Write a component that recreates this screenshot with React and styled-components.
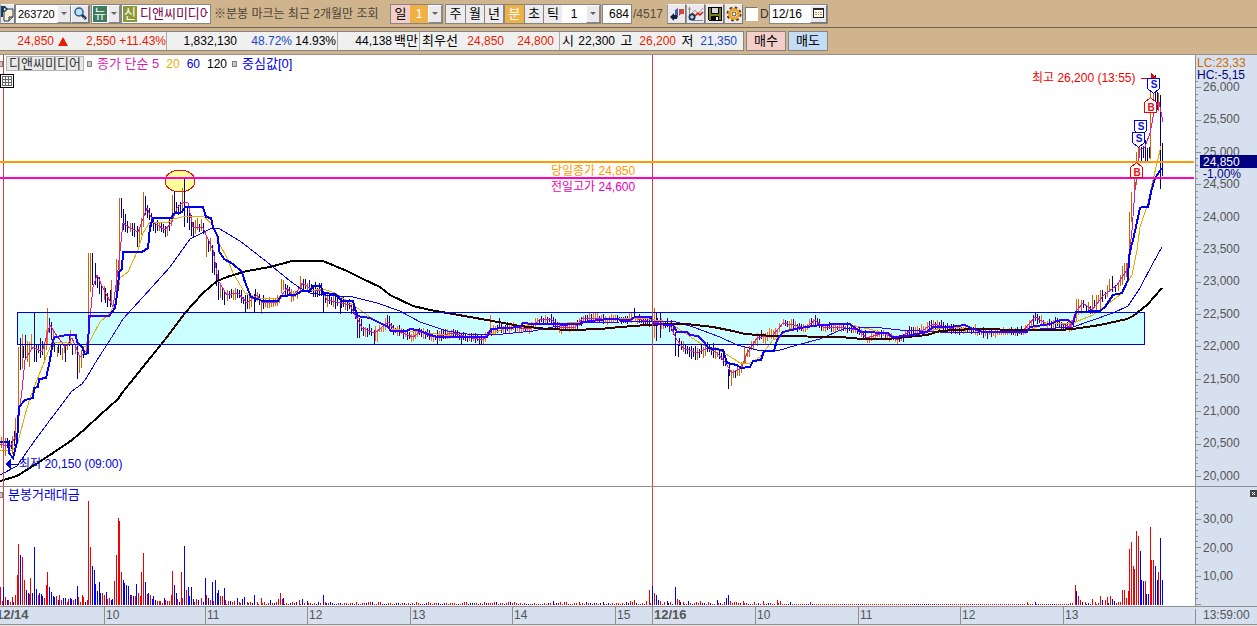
import React, { useState } from 'react'
import styled, { createGlobalStyle } from 'styled-components'

const GlobalStyle = createGlobalStyle`
    * { box-sizing: border-box; }
    body { margin: 0; background: #d0b48e; }
    button, input, select { font: inherit; color: inherit; margin: 0; }
`

const FONT = '"Liberation Sans", "Noto Sans CJK KR", sans-serif'

const Page = styled.div`
    display: flex;
    flex-direction: column;
    height: 100vh;
    min-height: 480px;
    overflow: hidden;
    font-family: ${FONT};
    font-size: 12px;
    line-height: 16px;
    color: #000;
`

/* ---------- top bars ---------- */

const Toolbar = styled.header`
    display: flex;
    align-items: center;
    flex: none;
    height: 28px;
    border-bottom: 1px solid #6e6355;
    white-space: nowrap;
`
const Group = styled.div`
    display: flex;
    flex: none;
    width: ${p => p.$w}px;
    height: 20px;
    margin-right: ${p => p.$gap || 0}px;
    border: 1px solid #858585;
    background: #fff;
    overflow: hidden;
`
const Field = styled.input`
    flex: 1;
    min-width: 0;
    width: 0;
    padding: 0 2px;
    border: 0;
    outline: 0;
    background: transparent;
    text-align: ${p => p.$align || 'left'};
    color: ${p => p.$color || '#000'};
    font-size: ${p => p.$size || 12}px;
`
const Picker = styled.select`
    flex: 1;
    min-width: 0;
    padding: 0;
    border: 0;
    outline: 0;
    appearance: none;
    border-radius: 0;
    text-align: center;
    text-align-last: center;
    background: ${p => p.$bg || '#fff'};
    color: ${p => p.$color || '#000'};
`
const SmallButton = styled.button`
    display: flex;
    flex: none;
    align-items: center;
    justify-content: center;
    width: ${p => p.$w || 19}px;
    height: 18px;
    padding: 0;
    border: 1px solid;
    border-color: #fff #777 #777 #fff;
    background: #ebe9eb;
`
const ToolButton = styled(SmallButton)`
    height: 20px;
    border-color: #f4f4f4 #777 #777 #999;
`
const Arrow = styled.span`
    display: flex;
    flex: none;
    align-items: center;
    justify-content: center;
    width: ${p => p.$w || 14}px;
    border: 1px solid;
    border-color: #fff #888 #888 #fff;
    background: #ebe9eb;

    &::after {
        content: '';
        border: 3px solid transparent;
        border-top-color: #666;
        border-bottom: 0;
    }
`
const Badge = styled.span`
    flex: none;
    width: 14px;
    margin: 1px;
    background: ${p => p.$bg};
    color: #fff;
    font-size: 13px;
    text-align: center;
`
const Notice = styled.span`
    flex: none;
    width: 178px;
    padding-left: 2px;
    color: #4c4437;
`
const Period = styled.button`
    flex: none;
    width: 19px;
    padding: 0;
    border: 0;
    border-left: ${p => (p.$first ? 0 : 1)}px solid #858585;
    background: ${p => p.$bg || '#ececec'};
    color: ${p => p.$color || '#000'};
    font-size: 13px;
    line-height: 17px;
`
const Total = styled.span`
    flex: none;
    width: 34px;
    color: #554a3c;
`
const DayCheck = styled.label`
    display: flex;
    flex: none;
    align-items: center;
    width: 26px;
    padding-left: 2px;
    gap: 2px;
    color: #333;

    input {
        appearance: none;
        width: 13px;
        height: 14px;
        border: 1px solid;
        border-color: #777 #fff #fff #777;
        background: #fff;
    }
`

const QuoteBar = styled.section`
    display: flex;
    align-items: center;
    flex: none;
    height: 27px;
    border-bottom: 1px solid #989086;
    white-space: nowrap;
`
const Quote = styled.div`
    display: flex;
    flex: none;
    height: 20px;
    margin-right: 2px;
    border: 1px solid #858585;
    border-left: 0;
    background: #f0f0f0;
`
const Cell = styled.div`
    display: flex;
    align-items: center;
    width: ${p => p.$w}px;
    border-right: ${p => (p.$last ? 0 : 1)}px solid #aaa;
`
const Num = styled.span`
    width: ${p => p.$w}px;
    text-align: right;
    color: ${p => p.$color || '#000'};
`
const Tag = styled.span`
    width: ${p => p.$w}px;
    padding-left: 2px;
    font-size: 13px;
`
const Triangle = styled.i`
    margin-left: 4px;
    border: 5px solid transparent;
    border-top: 0;
    border-bottom: 9px solid #e81c00;
`
const OrderButton = styled.button`
    width: 40px;
    height: 20px;
    margin-right: 2px;
    padding: 0;
    border: 1px solid #858585;
    background: ${p => p.$bg};
    font-size: 13px;
`

/* ---------- chart ---------- */

const ChartGrid = styled.main`
    display: grid;
    flex: 1;
    min-height: 0;
    grid-template-columns: minmax(0, 1fr) 62px;
    grid-template-rows: minmax(0, 432fr) minmax(0, 119fr) 19px;
    background: #fff;
`
const Pane = styled.div`
    position: relative;
    min-width: 0;
    min-height: 0;
    overflow: hidden;
    border-bottom: ${p => (p.$line ? 1 : 0)}px solid #8f8f8f;

    svg { display: block; width: 100%; height: 100%; }
`
const Scale = styled(Pane)`
    border-left: 1px solid #8f8f8f;
    background: #d6e0ef;
`
const TimePane = styled(Pane)`
    border-top: 1px solid #8f8f8f;
    border-bottom: 1px solid #8f8f8f;
    background: #d6e0ef;
`
const Legend = styled.div`
    position: absolute;
    top: 1px;
    left: 0;
    display: flex;
    align-items: center;
    gap: 3px;
    font-size: 13px;
    line-height: 14px;
    white-space: nowrap;
`
const Knob = styled.i`
    width: ${p => (p.$half ? 3 : 5)}px;
    height: 6px;
    border: 1px solid #808080;
    border-left-width: ${p => (p.$half ? 0 : 1)}px;
    background: #c8c8c8;
`
const NameButton = styled.button`
    width: 78px;
    height: 15px;
    padding: 0;
    border: 1px solid #b4b4b4;
    background: #e9e9e9;
    line-height: 13px;
    color: #333;
`
const Key = styled.span`
    padding: 0 2px;
    color: ${p => p.$color};
    font-size: ${p => (p.$num ? 12 : 13)}px;
`
const GridButton = styled.button`
    position: absolute;
    top: 19px;
    left: 0;
    width: 14px;
    height: 14px;
    padding: 1px;
    border: 1px solid #000;
    background: #fff;
`
const CloseButton = styled.button`
    position: absolute;
    top: 3px;
    right: 0;
    width: 7px;
    height: 7px;
    padding: 0;
    border: 0;
    background: #444;
`
const StatusStrip = styled.footer`
    flex: none;
    height: 1px;
    background: #e4e4e4;
`

/* x,y pairs of every overlay line */
const ma5 = [0,444,10,447,17,433,22,390,25,360,33,347,42,352,50,325,55,333,65,347,72,338,80,357,87,350,93,287,97,275,103,288,113,307,118,270,123,223,130,228,138,232,147,208,153,222,165,230,172,222,177,208,183,202,188,203,193,227,203,228,213,250,218,280,227,295,238,293,247,303,257,295,263,303,277,302,287,288,293,297,303,283,312,290,322,290,327,300,350,305,362,328,375,333,388,322,395,330,413,337,420,332,433,337,453,333,467,337,483,340,490,330,507,327,530,329,540,319,552,320,560,328,575,327,583,318,597,318,607,320,620,318,633,318,647,321,670,325,677,340,683,348,697,353,707,348,717,353,725,362,732,373,742,367,747,353,757,338,773,335,783,323,793,325,805,328,815,320,823,327,840,327,857,330,867,338,883,333,897,340,910,331,923,330,933,324,953,329,977,330,983,333,1023,331,1035,317,1047,324,1060,323,1070,327,1077,310,1083,303,1092,310,1103,296,1117,285,1127,270,1129,257,1132,230,1135,190,1140,150,1145,147,1150,133,1155,107,1159,102,1163,122]
const ma20 = [0,450,13,450,18,442,25,415,30,398,37,380,45,360,52,342,67,343,82,346,87,347,93,335,100,322,108,315,115,305,120,278,128,272,138,250,143,233,150,222,167,223,173,219,187,216,203,216,213,225,220,245,227,258,233,273,245,293,260,299,278,298,300,292,323,289,335,293,353,305,370,317,390,329,420,332,453,336,487,336,503,329,537,324,567,323,587,322,610,319,640,318,670,322,680,330,703,345,723,352,740,363,750,363,760,357,773,340,790,329,823,325,847,324,873,330,897,337,920,333,947,327,973,329,1027,331,1047,323,1073,323,1093,315,1120,295,1132,275,1137,250,1140,227,1148,203,1153,180,1161,146]
const ma60 = [0,475,17,466,33,443,50,420,72,391,82,384,87,377,97,360,110,340,123,319,143,297,170,267,190,239,194,237,212,228,218,228,240,241,267,262,290,281,300,288,310,293,325,295,353,297,377,303,400,311,420,322,447,331,467,334,493,335,533,331,553,327,583,323,620,322,653,321,673,321,693,327,720,337,737,345,757,350,777,351,797,345,820,339,843,329,873,327,900,330,940,332,980,332,1027,331,1040,329,1073,327,1093,320,1113,313,1128,306,1140,288,1152,265,1162,247]
const ma120 = [0,481,17,476,33,466,53,453,72,440,85,429,100,415,118,399,122,393,147,362,167,337,185,313,203,293,217,281,227,277,247,271,270,267,292,261,323,261,347,271,363,279,380,287,390,295,413,306,430,310,453,314,487,320,520,326,547,329,573,330,600,329,620,327,647,325,667,324,687,324,713,327,733,331,745,334,773,336,840,337,863,339,887,339,907,337,927,335,940,331,973,329,1027,330,1060,330,1073,329,1100,325,1127,319,1133,316,1147,305,1162,288]
const mid = [0,442,8,442,9,453,13,458,17,442,19,407,25,400,33,398,34,388,38,387,39,379,46,378,50,360,53,340,55,337,63,336,65,335,76,335,77,342,82,347,85,354,88,353,89,316,109,316,115,308,118,288,119,272,122,269,123,252,142,252,148,248,150,227,153,218,172,218,173,214,182,212,185,207,203,207,206,217,211,218,213,227,218,237,219,251,224,259,233,264,242,272,245,282,251,297,258,299,262,301,278,301,281,296,295,295,302,291,310,291,313,286,321,286,323,293,335,294,342,301,353,301,357,316,370,318,388,327,391,331,407,331,410,329,417,330,428,334,437,337,487,337,491,329,520,327,523,323,533,324,580,324,583,322,607,319,630,320,635,317,651,317,653,324,673,325,677,332,687,332,690,335,698,336,705,343,708,348,723,350,727,363,737,365,741,368,750,367,753,361,761,360,764,351,774,351,777,340,783,332,800,328,820,325,840,324,850,324,855,328,861,332,888,333,892,337,907,336,927,332,933,327,950,327,965,325,973,329,983,332,1027,332,1030,327,1050,324,1060,320,1068,320,1073,324,1076,312,1100,311,1105,307,1113,295,1122,293,1128,280,1129,257,1131,247,1133,240,1137,222,1140,208,1142,207,1148,207,1151,192,1155,178,1162,168]

/* x top bottom direction */
const candleText = `1 437 448 u,3 457 467 d,5 438 456 u,7 438 443 d,9 440 449 d,11 441 449 d,12 436 454 u,14 431 446 d,15 418 440 u,17 433 443 d,
18 347 408 u,20 338 370 d,22 334 369 u,23 346 358 d,25 335 358 d,27 341 362 u,29 342 367 u,31 334 350 u,34 313 362 d,36 345 362 d,38 344 353 d,40 338 358 d,42 341 355 d,44 342 362 u,46 330 350 u,47 308 345 u,49 318 333 d,51 322 340 d,53 329 347 u,54 342 352 d,57 347 357 u,58 344 353 d,60 345 355 d,62 348 360 u,64 344 353 u,65 345 362 d,67 343 350 u,69 335 346 d,70 330 344 u,72 345 355 d,75 344 354 u,77 345 379 d,79 355 373 u,81 350 368 u,83 346 358 d,86 342 354 u,
88 253 345 u,90 253 292 u,92 253 285 d,95 263 285 d,97 275 288 d,99 277 294 d,101 284 302 d,104 286 300 u,105 288 303 d,107 293 307 d,110 290 307 d,111 280 304 u,113 300 307 d,115 299 306 u,116 259 300 u,
119 198 285 u,121 198 218 d,123 209 230 d,125 214 232 d,127 221 233 d,130 223 232 u,132 223 236 d,134 223 237 d,137 226 247 d,139 228 246 u,141 218 235 u,143 192 227 u,145 196 215 d,147 205 218 d,149 208 220 d,151 213 227 d,153 217 231 d,155 222 233 d,157 220 231 d,159 222 231 u,161 223 232 d,163 224 233 d,165 226 237 d,167 226 236 u,169 219 231 d,171 215 226 u,
172 195 218 u,174 191 213 d,176 202 213 d,178 205 215 d,180 202 214 d,182 188 212 u,184 178 227 d,187 207 223 d,189 208 230 d,191 215 236 d,193 222 237 d,195 220 234 u,197 218 230 u,199 224 232 d,201 219 231 u,203 223 234 d,206 235 257 u,208 240 252 d,210 238 251 u,212 245 273 d,214 252 275 d,216 263 286 d,218 270 300 d,220 283 298 u,222 288 300 d,224 292 305 d,227 290 301 u,
245 295 312 d,254 294 312 d,261 300 314 u,281 279 293 u,283 280 290 u,300 276 292 u,323 293 312 d,340 298 314 d,357 313 338 d,359 318 338 d,374 330 344 d,377 330 342 u,437 330 344 d,461 333 344 d,490 315 335 u,499 318 327 d,634 308 318 d,652 312 344 d,654 308 338 u,656 312 341 d,660 313 338 d,675 332 356 d,678 345 357 d,728 369 389 d,731 370 386 u,744 346 363 u,
1076 299 322 u,1078 299 315 u,1081 300 314 u,1083 300 308 d,1086 305 312 d,1088 302 311 u,1090 306 314 d,1092 295 314 u,1094 300 306 d,1096 295 310 u,1098 295 302 u,1100 290 310 u,1102 290 302 d,1105 292 299 d,1107 285 297 u,1109 279 290 u,1112 276 292 d,1115 285 292 d,1118 283 291 u,1120 275 286 u,1122 266 285 u,1124 263 280 u,1126 263 277 u,
1129 212 267 u,1131 192 222 u,1134 178 200 u,1136 152 185 u,1138 148 168 u,1139 140 152 u,1141 147 163 d,1143 146 158 d,1145 140 161 d,1147 148 162 d,1149 147 158 d,1150 90 159 u,1153 90 100 u,1155 75 108 d,1157 92 110 d,1158 93 111 u,1160 95 189 d,1162 143 176 d`

/* x height direction, one entry for each busy minute */
const volumeText = `0 18 u,2 4 u,3 18 d,5 8 u,7 5 d,8 5 u,10 3 u,12 8 u,13 3 d,15 10 u,17 30 u,18 61 u,20 50 d,22 48 u,24 25 u,26 15 d,28 12 d,29 11 u,30 27 u,32 12 d,34 58 d,36 16 d,38 10 u,39 12 d,41 11 d,42 9 d,44 7 u,46 20 u,47 33 u,49 18 d,51 13 d,53 9 d,54 8 d,56 9 u,58 5 d,59 10 u,61 5 u,63 7 d,65 7 d,67 3 u,68 6 u,70 7 d,71 6 d,73 5 u,75 6 d,77 19 d,78 8 u,80 3 u,82 10 u,83 8 u,85 3 d,87 5 u,
88 104 u,90 58 u,92 39 d,94 35 d,95 21 d,97 14 d,99 23 d,100 12 d,102 12 u,104 10 u,106 13 d,107 6 u,109 7 u,111 5 d,112 6 d,114 24 u,116 50 u,118 87 u,119 84 u,121 33 u,123 25 d,124 22 d,126 20 d,128 19 d,130 10 d,131 10 u,133 9 d,135 9 u,136 21 d,138 12 u,140 9 u,141 33 u,143 52 u,145 23 d,147 11 u,148 12 d,150 10 u,152 6 d,153 9 d,155 5 d,157 4 u,159 4 u,160 4 u,162 2 u,164 7 d,165 5 u,167 4 u,169 4 u,171 10 u,172 34 u,174 20 d,176 12 d,177 6 u,179 3 d,181 33 u,182 7 u,184 59 d,186 15 u,188 18 d,189 9 d,191 18 d,193 6 d,194 3 u,196 6 u,198 5 d,201 7 u,203 3 d,
205 27 d,206 10 u,208 7 d,210 5 u,212 23 d,213 4 u,215 25 d,217 12 d,218 15 d,220 9 u,222 9 u,224 17 d,225 5 u,228 4 u,230 4 d,232 3 u,234 4 u,237 7 d,239 3 u,242 6 d,244 8 d,247 3 u,250 3 u,254 10 d,257 3 u,261 7 u,270 5 d,276 3 u,278 6 u,280 12 u,282 6 u,283 7 d,299 5 u,302 6 d,307 4 d,323 10 d,325 3 u,
553 4 d,579 3 u,603 3 d,630 4 u,634 5 u,646 4 u,649 15 u,652 19 d,654 12 u,656 10 d,658 5 d,660 4 u,664 3 u,667 4 d,670 3 u,675 18 d,677 6 u,679 5 u,683 3 u,688 4 d,700 4 u,717 5 d,724 3 u,726 7 d,728 10 d,730 4 u,743 4 u,763 4 u,777 5 u,780 4 u,790 3 d,810 3 u,1027 3 u,1035 3 d,
1075 20 u,1076 14 d,1078 9 u,1080 5 u,1085 3 u,1088 2 d,1092 6 u,1095 3 u,1100 9 u,1102 5 d,1105 5 u,1107 8 u,1110 9 u,1112 6 d,1114 4 d,1118 3 u,1122 15 u,1124 15 u,1126 7 u,1128 14 u,1129 56 u,1131 63 u,1133 39 u,1134 36 u,1136 74 u,1138 69 u,1140 54 d,1141 25 d,1143 24 d,1145 24 u,1146 11 d,1148 11 d,1150 78 u,1151 45 u,1153 45 u,1155 39 d,1157 25 d,1158 33 u,1160 67 d,1162 25 d`

const parse = text => text.split(',').map(t => t.trim().split(' ').map((v, i, a) => (i === a.length - 1 ? v : Number(v))))

const noise = n => {
    const v = Math.sin(n * 12.9898) * 43758.5453
    return v - Math.floor(v)
}

const valueAt = (line, x) => {
    for (let i = 2; i < line.length; i += 2) {
        if (line[i] >= x) {
            const t = (x - line[i - 2]) / (line[i] - line[i - 2])
            return line[i - 1] + t * (line[i + 1] - line[i - 1])
        }
    }
    return line[line.length - 1]
}

// quiet minutes hug the 5 bar average
const buildCandles = () => {
    const list = parse(candleText)
    const busy = new Set(list.map(c => c[0]))
    for (let x = 229; x < 1075; x += 2) {
        if (busy.has(x) || busy.has(x + 1)) continue
        const y = valueAt(ma5, x)
        const flat = x > 780 || (x > 400 && x < 650)
        const top = Math.round(y - 1 - noise(x) * (flat ? 5 : 7))
        const bottom = Math.round(y + 2 + noise(x + 5) * (flat ? 4 : 6))
        list.push([x, top, bottom, noise(x + 9) + (valueAt(ma5, x + 4) - y) / 12 > 0.5 ? 'd' : 'u'])
    }
    return list
}
const buildVolumes = () => {
    const list = parse(volumeText)
    const busy = new Set(list.map(c => c[0]))
    for (let x = 226; x < 1128; x += 2) {
        if (busy.has(x) || busy.has(x + 1)) continue
        const quiet = x > 780 && x < 1070
        list.push([x, quiet ? 1 : 1 + Math.floor(noise(x) * 2.3), noise(x + 3) > 0.72 ? 'd' : 'u'])
    }
    return list
}
const candles = buildCandles()
const volumes = buildVolumes()

const Series = ({ up, down, ink, blue }) => (
    <g fill="none">
        {candles.map(([x, top, bottom, dir], i) => (
            <rect key={i} x={x} y={top} width="1" height={bottom - top} fill={dir === 'u' ? up : down} />
        ))}
        <polyline points={ma5.join(' ')} stroke="#d81bb0" />
        <polyline points={ma20.join(' ')} stroke="#e8ac00" />
        <polyline points={ma60.join(' ')} stroke={blue} />
        <polyline points={ma120.join(' ')} stroke={ink} strokeWidth="2" />
        <polyline points={mid.join(' ')} stroke={blue} strokeWidth="2" />
    </g>
)

const Mark = ({ x, y, side }) => (
    <g transform={`translate(${x} ${y})`}>
        <path
            d={side === 'S' ? 'M.5 .5h12v10l-6 5l-6 -5z' : 'M.5 15.5h12v-10l-6 -5l-6 5z'}
            fill="#fff"
            stroke={side === 'S' ? '#0000f0' : '#f00000'}
        />
        <text x="7" y={side === 'S' ? 10 : 14} textAnchor="middle" fontSize="10" fontWeight="bold" fill={side === 'S' ? '#1010e0' : '#e81010'}>{side}</text>
    </g>
)

const PriceChart = () => (
    <svg viewBox="0 55 1195 431" preserveAspectRatio="none" shapeRendering="crispEdges">
        <defs>
            <clipPath id="band"><rect x="17" y="312" width="1128" height="33" /></clipPath>
        </defs>
        <rect x="17" y="312" width="1128" height="33" fill="#ccffff" />
        <ellipse cx="180" cy="181" rx="15" ry="11" fill="#ffff99" stroke="#e81010" />
        <Series up="#cc6600" down="#000080" ink="#000" blue="#0000f0" />
        <g clipPath="url(#band)">
            <Series up="#ff6a10" down="#330080" ink="#330000" blue="#3300ff" />
        </g>
        <rect x="17.5" y="312.5" width="1127" height="32" fill="none" stroke="#0000e0" />
        <rect x="3" y="55" width="1" height="431" fill="#d04040" />
        <rect x="652" y="55" width="1" height="431" fill="#d04040" />
        <rect x="0" y="161" width="1194" height="2" fill="#ff9900" />
        <rect x="0" y="177" width="1194" height="2" fill="#ff00cc" />
        <text x="551" y="175" fill="#ff9900">당일종가 24,850</text>
        <text x="551" y="191" fill="#e800b8">전일고가 24,600</text>
        <text x="1032" y="82" fill="#f00000">최고 26,200 (13:55)</text>
        <path d="M1141 78h10v-5l6 6h-16z" fill="#f00000" />
        <text x="19" y="468" fill="#0000e0">최저 20,150 (09:00)</text>
        <path d="M5 464l6 -5v5h8v1h-8v4z" fill="#0000e0" />
        <Mark x={1134} y={120} side="S" />
        <Mark x={1132} y={132} side="S" />
        <Mark x={1144} y={97} side="B" />
        <Mark x={1147} y={78} side="S" />
        <Mark x={1130} y={162} side="B" />
    </svg>
)

const PriceScale = () => {
    const minor = []
    for (let i = 0; i <= 61; i++) minor.push(i)
    return (
        <svg viewBox="1196 55 61 431" preserveAspectRatio="none" shapeRendering="crispEdges" fill="#555">
            {minor.map(i => (
                <rect key={i} x="1196" y={Math.round(476 - i * 6.48)} width={i % 5 ? 2 : 5} height="1" fill="#8f8f8f" />
            ))}
            {Array.from({ length: 13 }, (_, i) => (
                <text key={i} x="1203" y={Math.round(91 + i * 32.4)}>{(26000 - i * 500).toLocaleString('en-US')}</text>
            ))}
            <text x="1197" y="67" fill="#d06a00">LC:23,33</text>
            <text x="1197" y="79" fill="#000080">HC:-5,15</text>
            <rect x="1200" y="167" width="42" height="12" fill="#d6e0ef" />
            <rect x="1200" y="155" width="57" height="13" fill="#000080" />
            <text x="1203" y="166" fill="#fff">24,850</text>
            <text x="1203" y="178" fill="#000080">-1,00%</text>
        </svg>
    )
}

const VolumeChart = () => (
    <svg viewBox="0 487 1195 119" preserveAspectRatio="none" shapeRendering="crispEdges">
        <rect x="3" y="487" width="1" height="119" fill="#d04040" />
        <rect x="652" y="487" width="1" height="119" fill="#d04040" />
        {volumes.map(([x, h, dir], i) => (
            <rect key={i} x={x} y={605 - h} width="1" height={h} fill={dir === 'u' ? '#f00000' : '#0000f0'} />
        ))}
    </svg>
)

const VolumeScale = () => (
    <svg viewBox="1196 487 61 119" preserveAspectRatio="none" shapeRendering="crispEdges" fill="#555">
        {Array.from({ length: 19 }, (_, i) => (
            <rect key={i} x="1196" y={Math.round(604 - i * 5.7)} width={i % 5 ? 2 : 5} height="1" fill="#8f8f8f" />
        ))}
        <text x="1203" y="523">30,00</text>
        <text x="1203" y="552">20,00</text>
        <text x="1203" y="580">10,00</text>
    </svg>
)

const hours = [[104, '10'], [205, '11'], [307, '12'], [410, '13'], [512, '14'], [615, '15'], [652, '12/16'], [755, '10'], [858, '11'], [960, '12'], [1063, '13']]

const TimeScale = () => (
    <svg viewBox="0 607 1195 17" preserveAspectRatio="none" shapeRendering="crispEdges" fill="#555">
        <text x="-4" y="619" fontSize="13" fontWeight="bold">12/14</text>
        {hours.map(([x, label]) => (
            <g key={x}>
                <rect x={x} y="607" width="1" height="17" fill="#8f8f8f" />
                <text x={x + 2} y="619" fontSize={label.length > 2 ? 13 : 12} fontWeight={label.length > 2 ? 'bold' : 'normal'}>{label}</text>
            </g>
        ))}
    </svg>
)

/* ---------- toolbar drawings ---------- */

const NoteIcon = () => (
    <svg width="13" height="16" viewBox="0 0 13 16">
        <path d="M3 3h9v8l-4 4H3z" fill="#fdf2cf" stroke="#1d3558" />
        <path d="M12 11H8v4" fill="#c9b37a" stroke="#1d3558" />
        <path d="M0 0h4l3 3l-3 3H2v5H0z" fill="#173a66" />
        <path d="M3 2l2 1l-2 2z" fill="#fff" />
    </svg>
)
const SearchIcon = () => (
    <svg width="15" height="15" viewBox="0 0 15 15">
        <circle cx="6" cy="6" r="4" fill="#b9e3f7" stroke="#245a96" strokeWidth="1.5" />
        <path d="M9 9l4 4" stroke="#173a66" strokeWidth="3" />
        <path d="M10 11l3 3" stroke="#b98c4a" />
    </svg>
)
const FlipIcon = () => (
    <svg width="16" height="16" viewBox="0 0 16 16">
        <path d="M10 3h5v5h-3l-2 2z" fill="#cf4a3c" />
        <path d="M6 4l3 -2v10l-3 -2z" fill="#3a61b4" />
        <path d="M1 11l4 -4v2h3v4H5v2z" fill="#14213f" />
    </svg>
)
const TrendIcon = () => (
    <svg width="16" height="16" viewBox="0 0 16 16" fill="none">
        <path d="M1.5 1v13M0 3h3M4 14.5h11" stroke="#888" />
        <path d="M3 8l4 -4l3 4l5 -6" stroke="#999" />
        <path d="M4 7l3 3l3 -3l2 2l3 -3" stroke="#e01010" strokeWidth="1.5" />
        <circle cx="4" cy="11" r="3.5" fill="#153864" />
        <path d="M2 11h4M4 9v4" stroke="#fff" />
    </svg>
)
const SaveIcon = () => (
    <svg width="16" height="16" viewBox="0 0 16 16" shapeRendering="crispEdges">
        <path d="M1.5 1.5h13v13h-12l-1 -1z" fill="#7c7c1c" stroke="#000" />
        <path d="M4.5 1.5h7v6h-7z" fill="#d8d8d8" stroke="#000" />
        <path d="M4 10h8v5H4z" fill="#000" />
        <path d="M9 11h2v3H9z" fill="#fff" />
    </svg>
)
const GearIcon = () => (
    <svg width="16" height="16" viewBox="0 0 16 16" fill="none">
        <circle cx="8" cy="8" r="6" stroke="#4a3a20" strokeWidth="3" strokeDasharray="2.4 2.3" />
        <circle cx="8" cy="8" r="4.5" fill="#fff" stroke="#f2a32c" strokeWidth="3" />
        <circle cx="8" cy="8" r="2" stroke="#4a3a20" />
    </svg>
)
const CalendarIcon = () => (
    <svg width="12" height="11" viewBox="0 0 12 11" shapeRendering="crispEdges">
        <path d="M.5 .5h10v9H.5z" fill="#fff" stroke="#222" />
        <path d="M1 1h9v1H1z" fill="#333" />
        <path d="M2 4h2v1H2zM5 4h1v1H5zM7 4h2v1H7zM2 6h2v1H2zM5 6h1v1H5zM7 6h2v1H7z" fill="#d98a20" />
    </svg>
)
const TableIcon = () => (
    <svg width="10" height="10" viewBox="0 0 10 10" shapeRendering="crispEdges">
        <path d="M.5 .5h9v9h-9zM3.5 0v10M6.5 0v10M0 3.5h10M0 6.5h10" fill="none" stroke="#666" />
    </svg>
)

const RED = '#e81c00'
const BLUE = '#1848c8'

const App = () => {
    const [daily, setDaily] = useState(false)
    return (
        <Page>
            <GlobalStyle />
            <Toolbar>
                <ToolButton $w={15} aria-label="메모"><NoteIcon /></ToolButton>
                <Group $w={75} $gap={1}>
                    <Field $size={11} aria-label="종목코드" defaultValue="263720" />
                    <Arrow />
                    <SmallButton $w={18} aria-label="종목 검색"><SearchIcon /></SmallButton>
                </Group>
                <Group $w={30}>
                    <Badge $bg="#3c7c5c">뉴</Badge>
                    <Arrow $w={12} />
                </Group>
                <Group $w={90} $gap={1}>
                    <Badge $bg="#8c9a34">신</Badge>
                    <Field $size={13} $color="#780048" aria-label="종목명" defaultValue="디앤씨미디어" />
                </Group>
                <Notice>※분봉 마크는 최근 2개월만 조회</Notice>
                <Group $w={53} $gap={2}>
                    <Period $first $bg="#f4cfca">일</Period>
                    <Picker $bg="#efb044" $color="#fff" aria-label="일 간격"><option>1</option></Picker>
                    <Arrow />
                </Group>
                <Group $w={59}>
                    <Period $first>주</Period>
                    <Period>월</Period>
                    <Period>년</Period>
                </Group>
                <Group $w={97} $gap={1}>
                    <Period $first $bg="#efb044" $color="#fff">분</Period>
                    <Period>초</Period>
                    <Period>틱</Period>
                    <Picker aria-label="분 간격"><option>1</option></Picker>
                    <Arrow />
                </Group>
                <Group $w={30} $gap={1}>
                    <Field $align="right" aria-label="봉 개수" defaultValue="684" />
                </Group>
                <Total>/4517</Total>
                <ToolButton aria-label="차트 이동"><FlipIcon /></ToolButton>
                <ToolButton aria-label="지표 추가"><TrendIcon /></ToolButton>
                <ToolButton aria-label="저장"><SaveIcon /></ToolButton>
                <ToolButton aria-label="설정"><GearIcon /></ToolButton>
                <DayCheck>
                    <input type="checkbox" checked={daily} onChange={e => setDaily(e.target.checked)} />
                    D
                </DayCheck>
                <Group $w={59}>
                    <Field aria-label="날짜" defaultValue="12/16" />
                    <SmallButton $w={17} aria-label="달력"><CalendarIcon /></SmallButton>
                </Group>
            </Toolbar>

            <QuoteBar>
                <Quote>
                    <Cell $w={167}>
                        <Num $w={54} $color={RED}>24,850</Num>
                        <Triangle />
                        <Num $w={48} $color={RED}>2,550</Num>
                        <Num $w={50} $color={RED}>+11.43%</Num>
                    </Cell>
                    <Cell $w={171}>
                        <Num $w={70}>1,832,130</Num>
                        <Num $w={55} $color={BLUE}>48.72%</Num>
                        <Num $w={44}>14.93%</Num>
                    </Cell>
                    <Cell $w={82}>
                        <Num $w={54}>44,138</Num>
                        <Tag $w={26}>백만</Tag>
                    </Cell>
                    <Cell $w={140}>
                        <Tag $w={38}>최우선</Tag>
                        <Num $w={46} $color={RED}>24,850</Num>
                        <Num $w={50} $color={RED}>24,800</Num>
                    </Cell>
                    <Cell $w={183} $last>
                        <Tag $w={14}>시</Tag>
                        <Num $w={41}>22,300</Num>
                        <Tag $w={20}>&nbsp;고</Tag>
                        <Num $w={41} $color={RED}>26,200</Num>
                        <Tag $w={20}>&nbsp;저</Tag>
                        <Num $w={41} $color={BLUE}>21,350</Num>
                    </Cell>
                </Quote>
                <OrderButton $bg="#f4cfca">매수</OrderButton>
                <OrderButton $bg="#c4dcf4">매도</OrderButton>
            </QuoteBar>

            <ChartGrid>
                <Pane $line>
                    <PriceChart />
                    <Legend>
                        <Knob $half />
                        <NameButton>디앤씨미디어</NameButton>
                        <Knob />
                        <Key $color="#d81bb0">종가 단순 5</Key>
                        <Key $num $color="#e8ac00">20</Key>
                        <Key $num $color="#0000e0">60</Key>
                        <Key $num $color="#000">120</Key>
                        <Knob />
                        <Key $color="#0000e0">중심값[0]</Key>
                    </Legend>
                    <GridButton aria-label="표 보기"><TableIcon /></GridButton>
                </Pane>
                <Scale $line><PriceScale /></Scale>
                <Pane>
                    <VolumeChart />
                    <Legend>
                        <Knob $half />
                        <Key $color="#0000e0">분봉거래대금</Key>
                    </Legend>
                </Pane>
                <Scale>
                    <VolumeScale />
                    <CloseButton aria-label="닫기">
                        <svg viewBox="0 0 7 7"><path d="M2 2l3 3M5 2l-3 3" stroke="#fff" /></svg>
                    </CloseButton>
                </Scale>
                <TimePane><TimeScale /></TimePane>
                <TimePane>
                    <svg viewBox="1195 607 62 17" preserveAspectRatio="none" shapeRendering="crispEdges" fill="#555">
                        <rect x="1195" y="609" width="1" height="15" fill="#8f8f8f" />
                        <text x="1203" y="619">13:59:00</text>
                    </svg>
                </TimePane>
            </ChartGrid>
            <StatusStrip />
        </Page>
    )
}

export default App
